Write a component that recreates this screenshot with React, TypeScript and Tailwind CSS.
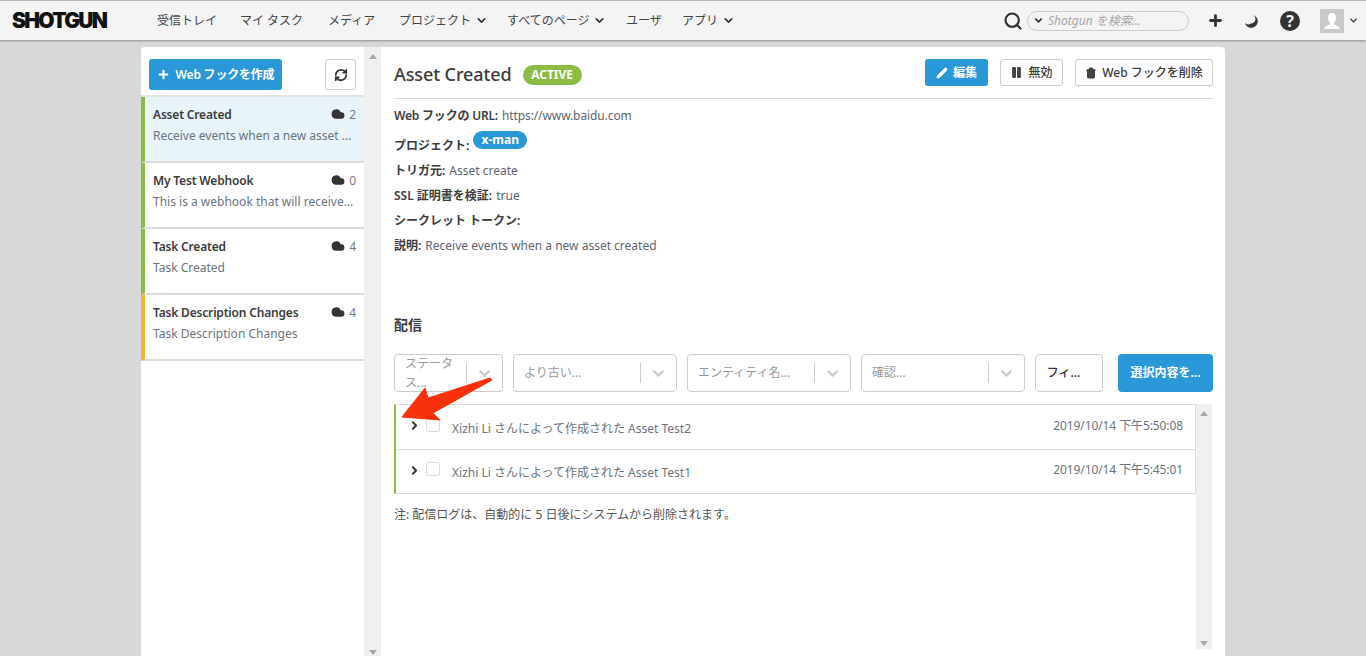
import { ChevronDown, ChevronRight, Cloud, Pause, Pencil, Plus, RefreshCw, Search, Trash2 } from 'lucide-react';

const navItems = [
  { label: '受信トレイ', w: 'w-[83px]' },
  { label: 'マイ タスク', w: 'w-[88px]' },
  { label: 'メディア', w: 'w-[71px]' },
  { label: 'プロジェクト', w: 'w-[108px]', menu: true },
  { label: 'すべてのページ', w: 'w-[119px]', menu: true },
  { label: 'ユーザ', w: 'w-[56px]' },
  { label: 'アプリ', w: 'w-[60px]', menu: true },
];

const hooks = [
  { title: 'Asset Created', desc: 'Receive events when a new asset ...', count: 2, active: true, bar: 'border-l-[#8bbb45]' },
  { title: 'My Test Webhook', desc: 'This is a webhook that will receive...', count: 0, bar: 'border-l-[#8bbb45]' },
  { title: 'Task Created', desc: 'Task Created', count: 4, bar: 'border-l-[#8bbb45]' },
  { title: 'Task Description Changes', desc: 'Task Description Changes', count: 4, bar: 'border-l-[#f5b335]' },
];

const selects = [
  { label: 'ステータス...', w: 'w-[109px]', wrap: true },
  { label: 'より古い...', w: 'w-[164px]' },
  { label: 'エンティティ名...', w: 'w-[164px]' },
  { label: '確認...', w: 'w-[164px]' },
];

const deliveries = [
  { name: 'Asset Test2', time: '2019/10/14 下午5:50:08' },
  { name: 'Asset Test1', time: '2019/10/14 下午5:45:01' },
];

const details = [
  { k: 'トリガ元:', v: 'Asset create' },
  { k: 'SSL 証明書を検証:', v: 'true' },
  { k: 'シークレット トークン:', v: '' },
  { k: '説明:', v: 'Receive events when a new asset created' },
];

function Arrow() {
  return (
    <svg className="absolute left-[396px] top-[375px]" width="100" height="50" viewBox="0 0 100 50">
      <path d="M6 42 L29 13 L32 23 L94 3 L96 5 L37 38 L44 45 Z" fill="#f9310a" stroke="#f9310a" strokeWidth="1" strokeLinejoin="round" />
    </svg>
  );
}

function ScrollUp() {
  return <span className="h-0 w-0 border-x-[4px] border-b-[5px] border-x-transparent border-b-[#a8a8a8]" />;
}

function ScrollDown() {
  return <span className="h-0 w-0 border-x-[4px] border-t-[5px] border-x-transparent border-t-[#a8a8a8]" />;
}

export default function App() {
  return (
    <div className="relative flex h-[656px] flex-col overflow-hidden bg-[#d8d8d8] font-['Noto_Sans','Noto_Sans_CJK_JP',sans-serif] text-[12px] text-[#5c6670]">
      <header className="flex h-[40px] shrink-0 items-center border-t border-[#b8b8b8] bg-[#f4f4f4] pl-3 shadow-[0_1px_2px_rgba(0,0,0,0.35)]">
        <span className="w-[145px] font-['Inter',sans-serif] text-[21px] leading-none font-black tracking-[-1.7px] text-[#111]">SHOTGUN</span>
        <nav className="flex items-center text-[12px] text-[#444]">
          {navItems.map((n) => (
            <span key={n.label} className={`flex items-center gap-1 ${n.w}`}>
              {n.label}
              {n.menu && <ChevronDown size={13} strokeWidth={3} className="text-[#333]" />}
            </span>
          ))}
        </nav>
        <div className="ml-auto flex items-center pr-[7px]">
          <Search size={20} strokeWidth={2.6} className="text-[#333]" />
          <div className="ml-[4px] flex h-[20px] w-[162px] items-center rounded-full border border-[#ccc] pl-[5px]">
            <ChevronDown size={11} strokeWidth={3.5} className="text-[#333]" />
            <span className="ml-[4px] text-[12px] text-[#a5a5a5] italic">Shotgun を検索...</span>
          </div>
          <Plus size={17} strokeWidth={4} className="ml-[18px] text-[#333]" />
          <svg className="ml-[20px]" width="14" height="14" viewBox="0 0 14 14">
            <path d="M9 1 A6.5 6.5 0 1 1 1 9 A5 5 0 0 0 7 9.5 A4.5 4.5 0 0 0 9 1 Z" fill="#333" />
          </svg>
          <div className="ml-[22px] flex h-[20px] w-[20px] items-center justify-center rounded-full bg-[#333] text-[16px] leading-none font-bold text-[#f4f4f4]">?</div>
          <div className="ml-[20px] h-[24px] w-[24px] bg-[#c9c9c9]">
            <svg width="24" height="24" viewBox="0 0 24 24">
              <path d="M12 4 C9 4 8 6.5 8 9 C8 11.5 9.3 13.2 10 14 L10 15.5 C7 16.8 4.5 17.3 4 20 L20 20 C19.5 17.3 17 16.8 14 15.5 L14 14 C14.7 13.2 16 11.5 16 9 C16 6.5 15 4 12 4 Z" fill="#fff" />
            </svg>
          </div>
          <ChevronDown size={11} strokeWidth={3} className="ml-[4px] text-[#333]" />
        </div>
      </header>

      <div className="mt-[7px] ml-[141px] flex min-h-0 w-[1084px] flex-1 overflow-hidden rounded-t-[4px] bg-white">
        <aside className="flex w-[223px] shrink-0 flex-col">
          <div className="flex h-[50px] items-start justify-between border-b-2 border-[#e2e2e2] pt-3 pr-[8px] pl-2">
            <button className="flex h-[31px] w-[133px] items-center justify-center gap-[6px] rounded-[3px] bg-[#2a97d8] text-[12px] font-semibold text-white">
              <Plus size={13} strokeWidth={4} />
              <span className="tracking-[-0.2px]">Web フックを作成</span>
            </button>
            <button className="flex h-[31px] w-[31px] items-center justify-center rounded-[3px] border border-[#ccc] text-[#333]">
              <RefreshCw size={14} strokeWidth={3} />
            </button>
          </div>
          {hooks.map((h) => (
            <div key={h.title} className={`h-[66px] border-b-2 border-l-4 border-b-[#dcdcdc] px-2 pt-[9px] ${h.bar} ${h.active ? 'bg-[#e8f3fa]' : 'bg-white'}`}>
              <div className="flex items-center justify-between">
                <span className="text-[12px] leading-[18px] font-semibold tracking-[-0.18px] text-[#3c3c3c]">{h.title}</span>
                <span className="flex items-center gap-[4px] text-[#777]">
                  <Cloud size={14} fill="#333" stroke="#333" className="mb-[3px]" />
                  {h.count}
                </span>
              </div>
              <div className="mt-[3px] truncate leading-[18px] text-[#6a7480]">{h.desc}</div>
            </div>
          ))}
        </aside>

        <div className="flex w-[17px] shrink-0 flex-col items-center justify-between bg-[#f0f0f0] pt-[7px] pb-[1px]">
          <ScrollUp />
          <ScrollDown />
        </div>

        <main className="flex w-[844px] flex-col pr-[12px] pl-[13px]">
          <div className="flex h-[52px] shrink-0 items-start border-b border-[#dcdcdc] pt-3">
            <h1 className="text-[18px] leading-[31px] font-medium tracking-[-0.1px] text-[#3c3c3c]">Asset Created</h1>
            <span className="mt-[6px] ml-[11px] flex h-[20px] w-[59px] items-center justify-center rounded-full bg-[#8bbb45] text-[12px] font-bold text-white">ACTIVE</span>
            <div className="ml-auto flex gap-3 text-[12px] font-medium text-[#3c3c3c]">
              <button className="flex h-[27px] w-[63px] items-center justify-center gap-[5px] rounded-[3px] bg-[#2a97d8] font-semibold text-white">
                <Pencil size={12} fill="#fff" strokeWidth={2} />
                編集
              </button>
              <button className="flex h-[27px] w-[63px] items-center justify-center gap-[5px] rounded-[3px] border border-[#ccc]">
                <Pause size={13} fill="#444" strokeWidth={2} />
                無効
              </button>
              <button className="flex h-[27px] w-[138px] items-center justify-center gap-[5px] rounded-[3px] border border-[#ccc]">
                <Trash2 size={12} fill="#444" strokeWidth={2} />
                Web フックを削除
              </button>
            </div>
          </div>

          <div className="mt-[8px] flex h-[18px] items-center gap-1 tracking-[-0.1px]">
            <b className="font-semibold tracking-[-0.2px] text-[#3c3c3c]">Web フックの URL:</b>
            https://www.baidu.com
          </div>
          <div className="mt-[6px] flex h-[25px] items-start gap-1">
            <b className="mt-[6px] font-semibold text-[#3c3c3c]">プロジェクト:</b>
            <span className="flex h-[18px] w-[54px] items-center justify-center rounded-full bg-[#2a97d8] font-bold text-white">x-man</span>
          </div>
          <div className="flex flex-col gap-[7px] pt-[6px]">
            {details.map((d) => (
              <div key={d.k} className="flex h-[18px] items-center gap-1">
                <b className="font-semibold text-[#3c3c3c]">{d.k}</b>
                {d.v}
              </div>
            ))}
          </div>

          <h2 className="mt-[60px] text-[14px] leading-[20px] font-semibold text-[#3c3c3c]">配信</h2>

          <div className="mt-[19px] flex items-center">
            <div className="flex gap-[10px]">
              {selects.map((s) => (
                <div key={s.label} className={`flex h-[38px] items-center rounded-[4px] border border-[#ccc] ${s.w}`}>
                  <span className={`min-w-0 flex-1 pl-[10px] text-[12px] text-[#999] ${s.wrap ? 'leading-[19px]' : ''}`}>{s.label}</span>
                  <span className="h-[20px] w-px bg-[#ccc]" />
                  <ChevronDown size={17} strokeWidth={3} className="mx-[9px] text-[#ccc]" />
                </div>
              ))}
            </div>
            <button className="ml-[10px] h-[38px] w-[68px] rounded-[4px] border border-[#ccc] pr-[11px] font-medium text-[#333]">フィ...</button>
            <button className="ml-[15px] h-[38px] w-[95px] rounded-[4px] bg-[#2a97d8] font-semibold text-white">選択内容を...</button>
          </div>

          <div className="mt-[12px] flex">
            <div className="w-[802px]">
              <div className="border border-l-2 border-[#dcdcdc] border-l-[#8bbb45]">
                {deliveries.map((d, i) => (
                  <div key={d.name} className={`flex h-[44px] items-center pr-3 pl-[12px] ${i > 0 ? 'border-t border-[#dcdcdc]' : ''}`}>
                    <ChevronRight size={13} strokeWidth={3.5} className="mb-[3px] text-[#333]" />
                    <span className="mb-[5px] ml-[5px] h-[14px] w-[14px] rounded-[2px] border border-[#dcdcdc]" />
                    <span className="mt-[3px] ml-[12px] text-[#6a7480]">Xizhi Li さんによって作成された {d.name}</span>
                    <span className="mb-[3px] ml-auto tracking-[-0.1px] text-[#6a7480]">{d.time}</span>
                  </div>
                ))}
              </div>
              <p className="mt-[12px] leading-[18px] text-[#555]">注: 配信ログは、自動的に 5 日後にシステムから削除されます。</p>
            </div>
            <div className="flex h-[245px] w-[16px] shrink-0 flex-col items-center justify-between bg-[#f0f0f0] pt-[7px] pb-[3px]">
              <ScrollUp />
              <ScrollDown />
            </div>
          </div>
        </main>
      </div>
      <Arrow />
    </div>
  );
}
